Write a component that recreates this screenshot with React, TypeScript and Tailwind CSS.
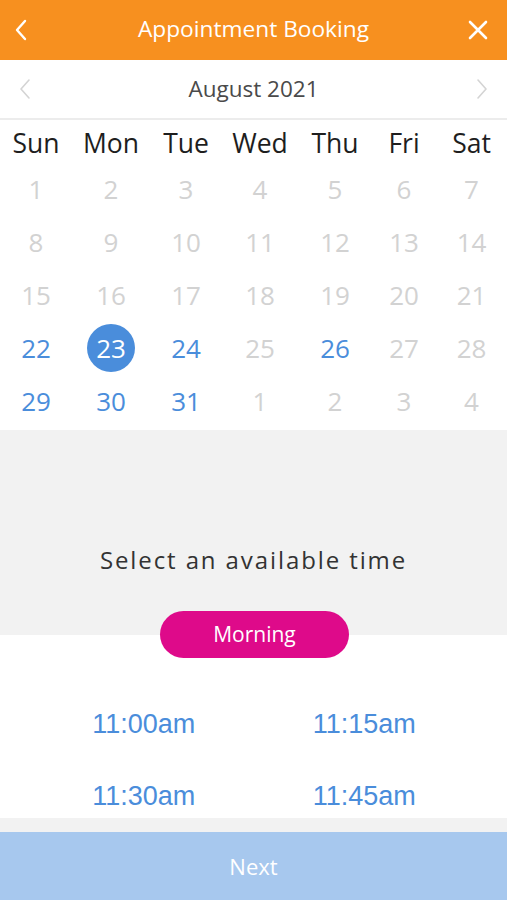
import React from "react";

const weekdays = ["Sun", "Mon", "Tue", "Wed", "Thu", "Fri", "Sat"];

type Day = { n: number; kind: "off" | "open" | "selected" };

const weeks: Day[][] = [
  [1, 2, 3, 4, 5, 6, 7].map((n) => ({ n, kind: "off" as const })),
  [8, 9, 10, 11, 12, 13, 14].map((n) => ({ n, kind: "off" as const })),
  [15, 16, 17, 18, 19, 20, 21].map((n) => ({ n, kind: "off" as const })),
  [
    { n: 22, kind: "open" },
    { n: 23, kind: "selected" },
    { n: 24, kind: "open" },
    { n: 25, kind: "off" },
    { n: 26, kind: "open" },
    { n: 27, kind: "off" },
    { n: 28, kind: "off" },
  ],
  [
    { n: 29, kind: "open" },
    { n: 30, kind: "open" },
    { n: 31, kind: "open" },
    { n: 1, kind: "off" },
    { n: 2, kind: "off" },
    { n: 3, kind: "off" },
    { n: 4, kind: "off" },
  ],
];

const times = ["11:00am", "11:15am", "11:30am", "11:45am"];

const open = { fontFamily: '"Open Sans", "Noto Sans", sans-serif' };

// columns are not quite even in the original
const cols = "grid grid-cols-[72px_78px_72px_76px_74px_64px_71px]";

export default function App() {
  return (
    <div className="w-[507px] h-[900px] flex flex-col bg-white overflow-hidden" style={open}>
      {/* Header */}
      <div className="h-[60px] bg-[#f7901f] flex items-center justify-between px-[12px] text-white shrink-0">
        <svg className="w-[20px] h-[24px]" viewBox="0 0 20 24" fill="none" stroke="currentColor" strokeWidth={2.4} strokeLinecap="round" strokeLinejoin="round">
          <path d="M13 3 L5 12 L13 21" />
        </svg>
        <h1 className="text-[22.7px] leading-none -mt-[2px] ml-[8px]">Appointment Booking</h1>
        <svg className="w-[22px] h-[22px] mr-[6px]" viewBox="0 0 22 22" fill="none" stroke="currentColor" strokeWidth={2.6} strokeLinecap="round">
          <path d="M3 3 L19 19 M19 3 L3 19" />
        </svg>
      </div>

      {/* Month bar */}
      <div className="h-[60px] flex items-center justify-between px-[18px] border-b-[2px] border-[#ececec] shrink-0">
        <svg className="w-[14px] h-[24px]" viewBox="0 0 14 24" fill="none" stroke="#d4d4d4" strokeWidth={1.6} strokeLinecap="round" strokeLinejoin="round">
          <path d="M11 3 L3 12 L11 21" />
        </svg>
        <span className="text-[22.5px] text-[#4a4a4a] leading-none">August 2021</span>
        <svg className="w-[14px] h-[24px]" viewBox="0 0 14 24" fill="none" stroke="#d4d4d4" strokeWidth={1.6} strokeLinecap="round" strokeLinejoin="round">
          <path d="M3 3 L11 12 L3 21" />
        </svg>
      </div>

      {/* Calendar */}
      <div className="pb-[3px] shrink-0">
        <div className={`${cols} h-[46px] items-center`}>
          {weekdays.map((d) => (
            <div key={d} className="text-center text-[26.5px] text-[#1e1e1e] leading-none">
              {d}
            </div>
          ))}
        </div>
        <div className="-mt-[3px]">
          {weeks.map((w, i) => (
            <div key={i} className={`${cols} h-[52.8px] items-center`}>
              {w.map((d, j) => (
                <div key={j} className="flex justify-center">
                  {d.kind === "selected" ? (
                    <span className="w-[48px] h-[48px] rounded-full bg-[#4a8ddb] text-white flex items-center justify-center text-[26px] leading-none">
                      {d.n}
                    </span>
                  ) : (
                    <span
                      className={`text-[26px] leading-none ${
                        d.kind === "open" ? "text-[#4a8ddb]" : "text-[#d2d2d2]"
                      }`}
                    >
                      {d.n}
                    </span>
                  )}
                </div>
              ))}
            </div>
          ))}
        </div>
      </div>

      {/* Time picker */}
      <div className="bg-[#f2f2f2] h-[205px] flex flex-col items-center justify-end shrink-0">
        <p className="text-[24px] text-[#333] tracking-[1.9px] leading-none mb-[63px]">Select an available time</p>
      </div>
      <div className="relative flex-1 flex flex-col">
        <div className="absolute left-[160px] -top-[24px] w-[189px] h-[47px] rounded-full bg-[#de0a8a] text-white text-[21px] flex items-center justify-center leading-none">
          Morning
        </div>
        <div className="grid grid-cols-2 pt-[76px] h-[183px] content-start">
          {times.map((t, i) => (
            <div
              key={t}
              className={`text-[27px] text-[#4a8ddb] leading-none h-[72px] flex justify-center ${
                i % 2 === 0 ? "pl-[34px]" : "pr-[32px]"
              }`}
              style={{ fontFamily: '"Liberation Sans", Arial, sans-serif' }}
            >
              {t}
            </div>
          ))}
        </div>
        <div className="h-[14px] bg-[#f2f2f2]" />
        <button className="flex-1 bg-[#a7c8ee] text-white text-[22px] flex items-center justify-center leading-none">
          Next
        </button>
      </div>
    </div>
  );
}
